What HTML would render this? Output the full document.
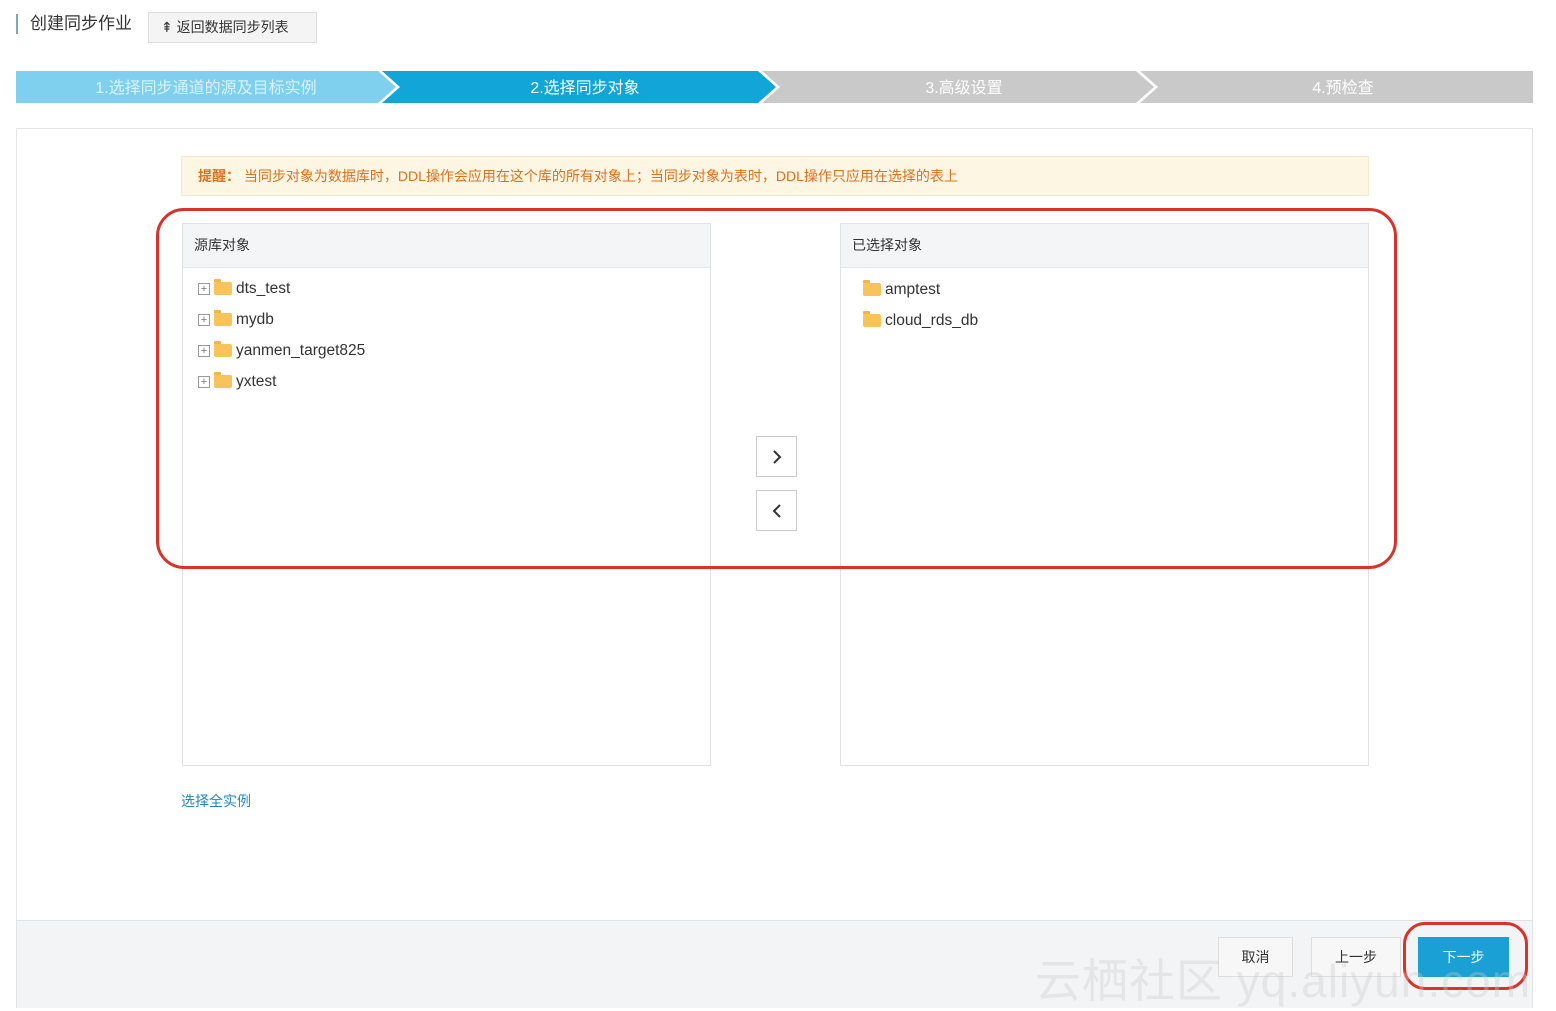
<!DOCTYPE html>
<html><head><meta charset="utf-8"><style>
*{box-sizing:border-box;margin:0;padding:0}
body{width:1556px;height:1008px;background:#fff;position:relative;overflow:hidden;font-family:"Liberation Sans","Noto Sans CJK SC",sans-serif;color:#333}
.abs{position:absolute}
.title{left:16px;top:14px;height:20px;border-left:2px solid #7aa7c0;padding-left:12px;font-size:17px;line-height:20px;color:#333}
.back{left:148px;top:12px;width:169px;height:31px;border:1px solid #ddd;background:#f4f4f4;font-size:14px;line-height:29px;padding-left:12px}
.steps{left:16px;top:71px;width:1517px;height:32px}
.panel{left:16px;top:128px;width:1517px;height:880px;border:1px solid #e4e4e4;border-bottom:none}
.tip{left:181px;top:156px;width:1188px;height:40px;background:#fdf6e3;border:1px solid #f5ead0;color:#e0701c;font-size:14px;line-height:38px;padding-left:16px}
.box{width:529px;height:543px;border:1px solid #e2e2e2;top:223px}
.box .h{height:44px;background:#f4f5f7;border-bottom:1px solid #e6e6e6;font-size:14px;line-height:43px;padding-left:11px}
.item{position:absolute;font-size:15.5px;color:#333}
.plus{display:inline-block;width:12px;height:12px;border:1px solid #999;font-size:11px;line-height:10px;text-align:center;color:#777;vertical-align:middle;margin-right:4px}
.fold{display:inline-block;width:18px;height:13px;background:#f7c35a;border-radius:1px 2px 2px 2px;vertical-align:middle;margin-right:4px;position:relative}
.fold:before{content:"";position:absolute;left:0;top:-3px;width:7px;height:3px;background:#f2b54a;border-radius:1px 1px 0 0}
.arr{left:756px;width:41px;height:41px;border:1px solid #ccc;background:#fff}
.arr svg{position:absolute;left:12px;top:12px}
.footer{left:17px;top:920px;width:1515px;height:88px;background:#f3f4f6;border-top:1px solid #e2e2e2}
.btn{top:937px;height:40px;border:1px solid #ddd;background:#f7f7f7;font-size:14px;line-height:38px;text-align:center}
.red{border:3px solid #d9322a}
</style></head><body>
<div class="abs title">创建同步作业</div>
<div class="abs back">⇞ 返回数据同步列表</div>
<svg class="abs steps" width="1517" height="32" viewBox="0 0 1517 32">
<polygon points="0,0 362,0 380,16 362,32 0,32" fill="#7fd0ef"/>
<polygon points="366,0 742,0 760,16 742,32 366,32 384,16" fill="#11a5d8"/>
<polygon points="746,0 1120,0 1138,16 1120,32 746,32 764,16" fill="#c9c9c9"/>
<polygon points="1124,0 1517,0 1517,32 1124,32 1142,16" fill="#c9c9c9"/>
<g font-family="Liberation Sans,Noto Sans CJK SC,sans-serif" font-size="16" fill="#fff" text-anchor="middle">
<text x="190" y="22" fill="#d8f1fb">1.选择同步通道的源及目标实例</text>
<text x="569" y="22">2.选择同步对象</text>
<text x="948" y="22">3.高级设置</text>
<text x="1327" y="22">4.预检查</text></g></svg>
<div class="abs panel"></div>
<div class="abs tip"><b>提醒：</b> 当同步对象为数据库时，DDL操作会应用在这个库的所有对象上；当同步对象为表时，DDL操作只应用在选择的表上</div>
<div class="abs box" style="left:182px"><div class="h">源库对象</div>
<div class="item" style="left:15px;top:56px"><span class="plus">+</span><span class="fold"></span>dts_test</div>
<div class="item" style="left:15px;top:87px"><span class="plus">+</span><span class="fold"></span>mydb</div>
<div class="item" style="left:15px;top:118px"><span class="plus">+</span><span class="fold"></span>yanmen_target825</div>
<div class="item" style="left:15px;top:149px"><span class="plus">+</span><span class="fold"></span>yxtest</div></div>
<div class="abs box" style="left:840px"><div class="h">已选择对象</div>
<div class="item" style="left:22px;top:57px"><span class="fold"></span>amptest</div>
<div class="item" style="left:22px;top:88px"><span class="fold"></span>cloud_rds_db</div></div>
<div class="abs arr" style="top:436px"><svg width="16" height="16"><path d="M5 2 L11 8 L5 14" fill="none" stroke="#333" stroke-width="2"/></svg></div>
<div class="abs arr" style="top:490px"><svg width="16" height="16"><path d="M11 2 L5 8 L11 14" fill="none" stroke="#333" stroke-width="2"/></svg></div>
<div class="abs" style="left:181px;top:791px;font-size:14px;color:#1e88c7">选择全实例</div>
<div class="abs red" style="left:156px;top:208px;width:1241px;height:361px;border-radius:28px"></div>
<div class="abs footer"></div>
<div class="abs btn" style="left:1218px;width:75px">取消</div>
<div class="abs btn" style="left:1311px;width:90px">上一步</div>
<div class="abs btn" style="left:1418px;width:91px;background:#1ba0d6;border-color:#1ba0d6;color:#fff">下一步</div>
<div class="abs red" style="left:1403px;top:922px;width:125px;height:68px;border-radius:22px"></div>
<div class="abs" style="left:1035px;top:945px;font-size:46px;color:rgba(200,200,200,.35);letter-spacing:1px">云栖社区 yq.aliyun.com</div>
</body></html>
